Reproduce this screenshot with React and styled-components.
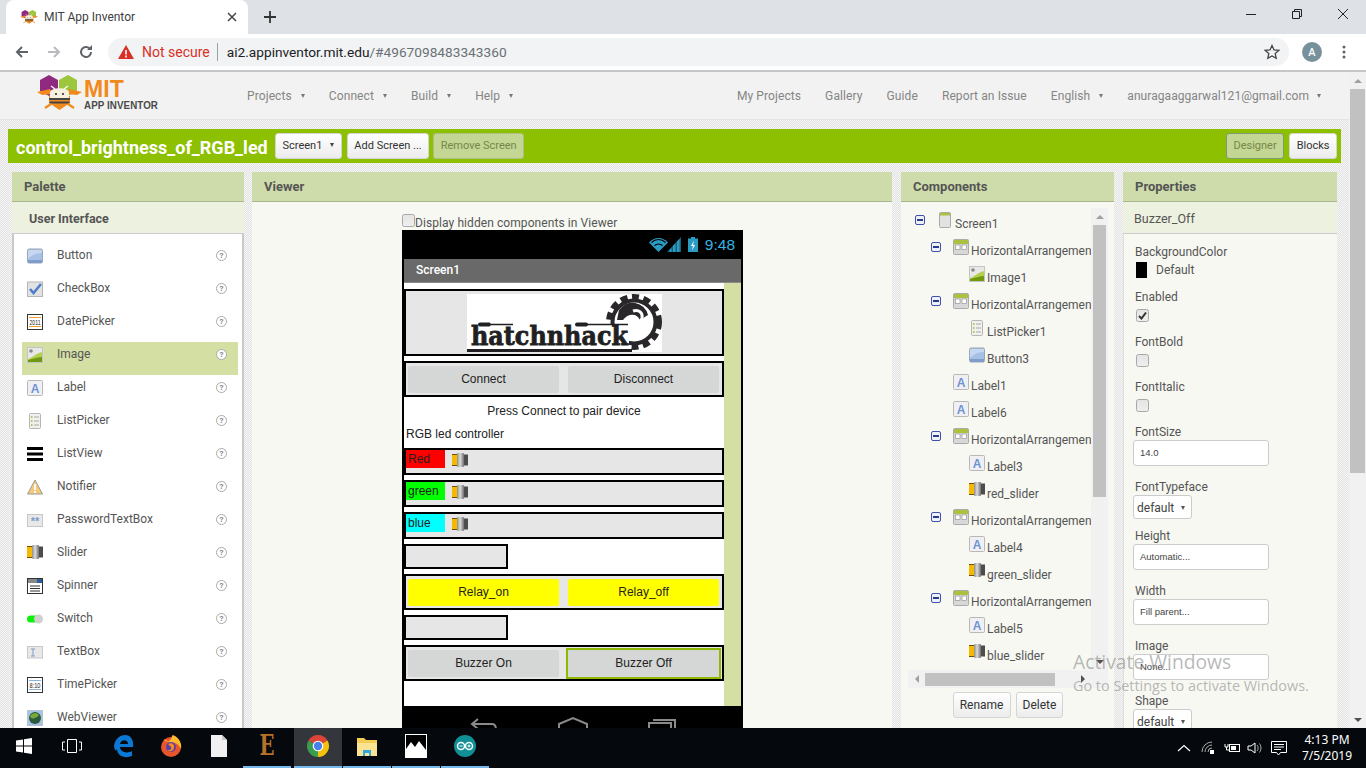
import React from 'react'
import styled, { createGlobalStyle } from 'styled-components'

const GlobalStyle = createGlobalStyle`
  html, body {
    margin: 0;
    padding: 0;
    height: 100%;
    overflow: hidden;
    font-family: Roboto, "Liberation Sans", sans-serif;
  }
  * { box-sizing: border-box; }
  svg { display: block; flex: none; }
`

const Root = styled.div`
  position: relative;
  width: 1366px;
  height: 768px;
  display: flex;
  flex-direction: column;
  overflow: hidden;
  background: #fff;
`

/* browser chrome */
const TabStrip = styled.div`
  height: 34px;
  flex: none;
  display: flex;
  background: #dee1e6;
`
const Tab = styled.div`
  width: 242px;
  margin-left: 6px;
  background: #fff;
  border-radius: 8px 8px 0 0;
  display: flex;
  align-items: center;
  padding: 0 10px 0 14px;
  font-size: 12px;
  color: #3c4043;
`
const TabTitle = styled.span`
  margin-left: 6px;
  flex: 1;
`
const NewTab = styled.div`
  width: 44px;
  display: flex;
  align-items: center;
  justify-content: center;
`
const Caption = styled.div`
  margin-left: auto;
  display: flex;
`
const CaptionButton = styled.div`
  width: 46px;
  display: flex;
  align-items: center;
  justify-content: center;
  padding-bottom: 6px;
`
const UrlBar = styled.div`
  height: 38px;
  flex: none;
  background: #fff;
  border-bottom: 2px solid #c4c6c8;
  display: flex;
  align-items: flex-start;
  padding: 4px 0 0 6px;
`
const NavButton = styled.div`
  width: 32px;
  height: 28px;
  display: flex;
  align-items: center;
  justify-content: center;
`
const Omnibox = styled.div`
  width: 1181px;
  height: 28px;
  margin-left: 6px;
  background: #f1f3f4;
  border-radius: 14px;
  display: flex;
  align-items: center;
  padding: 0 9px 0 10px;
  font-size: 13.7px;
`
const NotSecure = styled.span`
  margin-left: 8px;
  color: #d93025;
  font-size: 14px;
`
const Divider = styled.span`
  width: 1px;
  height: 18px;
  background: #9aa0a6;
  margin: 0 9px 0 7px;
`
const Host = styled.span`
  color: #202124;
`
const Path = styled.span`
  color: #6b7075;
`
const Star = styled.div`
  margin-left: auto;
`
const Avatar = styled.div`
  width: 20px;
  height: 20px;
  margin: 4px 0 0 13px;
  border-radius: 50%;
  background: #78909c;
  color: #fff;
  font-size: 11px;
  font-weight: 500;
  display: flex;
  align-items: center;
  justify-content: center;
`
const Kebab = styled.div`
  margin: 7px 0 0 20px;
`

/* page */
const PageRow = styled.div`
  flex: 1;
  min-height: 0;
  display: flex;
`
const Page = styled.div`
  width: 1349px;
  display: flex;
  flex-direction: column;
  overflow: hidden;
  background-color: #f3f3f3;
  background-image: repeating-conic-gradient(#e2e2e2 0 25%, #f6f6f6 0 50%);
  background-size: 2px 2px;
`
const PageScroll = styled.div`
  width: 17px;
  background: #f1f1f1;
  display: flex;
  flex-direction: column;
  align-items: center;
`
const ScrollArrow = styled.div`
  height: 17px;
  flex: none;
  display: flex;
  align-items: center;
  justify-content: center;
`
const PageThumb = styled.div`
  width: 15px;
  height: 384px;
  background: #c1c1c1;
`
const Spacer = styled.div`
  flex: 1;
`
const Header = styled.div`
  height: 48px;
  flex: none;
  background: #f2f2f2;
  border-bottom: 1px solid #e4e4e4;
  display: flex;
  align-items: center;
  padding: 0 28px 0 36px;
  font-size: 12px;
  letter-spacing: 0.1px;
  color: #858585;
`
const Logo = styled.div`
  width: 211px;
  flex: none;
  padding-bottom: 3px;
`
const Menu = styled.div`
  display: flex;
  gap: 24px;
  margin-left: ${p => (p.$right ? 'auto' : '0')};
  padding-top: ${p => (p.$right ? '0' : '1px')};
`
const MenuItem = styled.span`
  display: flex;
  align-items: center;
  gap: 9px;
  white-space: nowrap;
`
const EmailItem = styled(MenuItem)`
  letter-spacing: 0.06px;
  gap: 8px;
`
const Caret = styled.i`
  width: 0;
  height: 0;
  border-left: 2.5px solid transparent;
  border-right: 2.5px solid transparent;
  border-top: 4px solid ${p => p.$color || '#777'};
`
const ProjectBar = styled.div`
  height: 34px;
  flex: none;
  margin: 9px 8px;
  background: #8cc000;
  display: flex;
  align-items: center;
  padding: 0 4px 0 8px;
`
const ProjectName = styled.div`
  width: 259px;
  padding-top: 2px;
  color: #fff;
  font-size: 18px;
  font-weight: 700;
  white-space: nowrap;
`
const ToolButton = styled.div`
  height: 26px;
  display: flex;
  align-items: center;
  gap: 8px;
  padding: 0 6.5px 2px;
  margin-right: ${p => p.$mr ?? 5}px;
  font-size: 11px;
  border-radius: 3px;
  white-space: nowrap;
  color: ${p => (p.$active ? '#76874a' : '#333')};
  background: ${p => (p.$active ? '#c3d694' : 'linear-gradient(#fff, #ececec)')};
  border: 1px solid ${p => (p.$active ? p.$edge || '#aebf85' : '#d4d4d4')};
`
const ToolSpacer = styled.div`
  margin-left: auto;
`
const Panels = styled.div`
  flex: 1;
  min-height: 0;
  display: flex;
  padding-left: 12px;
`
const Panel = styled.section`
  width: ${p => p.$w}px;
  margin-right: ${p => p.$mr || 0}px;
  flex: none;
  display: flex;
  flex-direction: column;
  overflow: hidden;
  background: #f7f8f2;
`
const PanelHead = styled.div`
  height: 30px;
  flex: none;
  background: #cddcaa;
  border-bottom: 1px solid #aab78e;
  padding: 0 12px;
  line-height: 29px;
  font-size: 13px;
  font-weight: 700;
  color: #555;
`
const SubHead = styled.div`
  height: 32px;
  flex: none;
  background: #edf1e0;
  border-bottom: 1px solid #ccc;
  padding: 0 ${p => (p.$bold ? 17 : 11)}px;
  line-height: 33px;
  font-size: 12.5px;
  font-weight: ${p => (p.$bold ? 700 : 400)};
  color: #555;
`

/* palette */
const PaletteList = styled.div`
  flex: 1;
  background: #fff;
  border-left: 2px solid #c9c9c9;
  border-right: 2px solid #c9c9c9;
  padding: 9px 4px 0 8px;
  overflow: hidden;
`
const PaletteRow = styled.div`
  height: 33px;
  display: flex;
  align-items: flex-start;
  padding: 4px 11px 0 5px;
  font-size: 12px;
  line-height: 16px;
  color: #555;
  background: ${p => (p.$selected ? '#d3dfa3' : 'transparent')};
`
const PaletteIcon = styled.div`
  width: 30px;
  padding-top: 1px;
  flex: none;
`
const PaletteName = styled.span`
  flex: 1;
`
const Help = styled.span`
  width: 11px;
  height: 11px;
  margin-top: 3px;
  border: 1px solid #aaa;
  border-radius: 50%;
  font-size: 8px;
  line-height: 9px;
  font-weight: 700;
  text-align: center;
  color: #888;
  background: #fff;
`

/* viewer */
const ViewerBody = styled.div`
  flex: 1;
  padding: 12px 0 0 150px;
`
const HiddenToggle = styled.div`
  height: 16px;
  display: flex;
  font-size: 12px;
  letter-spacing: 0.08px;
  line-height: 19px;
  color: #555;
`
const Check = styled.span`
  width: 13px;
  height: 13px;
  flex: none;
  border: 1px solid #a8a8a8;
  border-radius: 2.5px;
  background: linear-gradient(#e4e4e4, #efefef);
  display: flex;
  align-items: center;
  justify-content: center;
`
const Phone = styled.div`
  width: 341px;
  background: #000;
  padding: 0 2px;
`
const StatusBar = styled.div`
  height: 29px;
  display: flex;
  align-items: center;
  justify-content: flex-end;
  gap: 7px;
  padding: 0 6px 0 0;
  color: #33b5e5;
  font-family: "Liberation Sans", sans-serif;
  font-size: 15.5px;
`
const TitleBar = styled.div`
  height: 24px;
  background: #696969;
  color: #fff;
  padding-left: 12px;
  font-size: 12px;
  font-weight: 500;
  line-height: 22px;
  box-shadow: inset 0 -1px 0 #8a8a8a;
`
const Screen = styled.div`
  height: 423px;
  display: flex;
  background: #fff;
  font-family: "Liberation Sans", sans-serif;
  font-size: 12px;
  color: #222;
`
const ScreenMain = styled.div`
  width: 320px;
  padding-top: 6px;
`
const ScreenScroll = styled.div`
  width: 17px;
  background: #d3dfa3;
`
const Arrangement = styled.div`
  height: ${p => p.$h}px;
  width: ${p => p.$w || 320}px;
  margin-bottom: ${p => (p.$flush ? 0 : 5)}px;
  border: 2px solid #000;
  background: #e6e6e6;
  display: flex;
  align-items: ${p => p.$align || 'center'};
  justify-content: ${p => p.$justify || 'flex-start'};
  gap: ${p => p.$gap || 0}px;
  padding-left: ${p => p.$pl || 0}px;
`
const LogoSlot = styled.div`
  margin-top: 3px;
`
const AppButton = styled.div`
  width: 151px;
  height: 27px;
  flex: none;
  border-radius: ${p => (p.$selected ? 0 : 2)}px;
  display: flex;
  align-items: center;
  justify-content: center;
  background: ${p => p.$bg || '#d5d7d6'};
  outline: ${p => (p.$selected ? '2px solid #8fb800' : 'none')};
`
const CenterText = styled.div`
  height: 27px;
  line-height: 29px;
  text-align: center;
`
const LeftText = styled.div`
  height: 19px;
  margin-bottom: 5px;
  padding: 1px 2px 0;
  line-height: 18px;
`
const ColorLabel = styled.div`
  width: 39px;
  height: 18px;
  flex: none;
  padding-left: 2px;
  line-height: 19px;
  background: ${p => p.$bg};
`
const SliderWrap = styled.div`
  margin: 3px 0 0 7px;
`
const SoftKeys = styled.div`
  height: 40px;
  display: flex;
  justify-content: center;
  gap: 60px;
  padding-top: 10px;
`

/* components */
const TreeFrame = styled.div`
  margin: 6px 0 0 7px;
  width: 200px;
  display: grid;
  grid-template-columns: 183px 17px;
  grid-template-rows: 462px 18px;
`
const Tree = styled.div`
  overflow: hidden;
  padding-top: 3px;
  font-size: 12px;
  line-height: 16px;
  color: #555;
`
const TreeRow = styled.div`
  height: 27px;
  display: flex;
  align-items: flex-start;
  white-space: nowrap;
  padding-left: ${p => 7 + p.$level * 16}px;
`
const ToggleCell = styled.div`
  width: ${p => (p.$root ? 24 : 22)}px;
  flex: none;
  padding-top: 4px;
`
const Toggle = styled.span`
  width: 10px;
  height: 10px;
  display: flex;
  align-items: center;
  justify-content: center;
  border: 1px solid #3f51a8;
  border-radius: 2px;
  background: #eef0fa;
`
const Minus = styled.i`
  width: 6px;
  height: 1.5px;
  background: #2a3a90;
`
const TreeIcon = styled.div`
  width: ${p => (p.$root ? 14 : 16)}px;
  flex: none;
  padding-top: 1px;
  margin-right: 2px;
`
const TreeLabel = styled.span`
  padding-top: 5px;
`
const VScroll = styled.div`
  background: #f1f1f1;
  display: flex;
  flex-direction: column;
  align-items: center;
`
const VThumb = styled.div`
  width: 13px;
  height: 272px;
  background: #c1c1c1;
`
const HScroll = styled.div`
  background: #f1f1f1;
  display: flex;
  align-items: center;
`
const HThumb = styled.div`
  width: 130px;
  height: 13px;
  background: #c1c1c1;
`
const HArrow = styled.div`
  width: 17px;
  flex: none;
  display: flex;
  align-items: center;
  justify-content: center;
`
const Corner = styled.div`
  background: #f1f1f1;
`
const TreeActions = styled.div`
  display: flex;
  justify-content: center;
  gap: 5px;
  margin: 4px 0 0 1px;
`
const ActionButton = styled.div`
  height: 26px;
  padding: 0 6px;
  display: flex;
  align-items: center;
  font-size: 12px;
  color: #333;
  border: 1px solid #d4d4d4;
  border-radius: 3px;
  background: linear-gradient(#fff, #ececec);
`

/* properties */
const PropList = styled.div`
  flex: 1;
  padding: 10px 0 0 11px;
  font-size: 12px;
  color: #555;
  border-left: 1px solid #ddd;
`
const Prop = styled.div`
  display: flex;
  flex-direction: column;
  align-items: flex-start;
  padding-bottom: ${p => p.$pb}px;
`
const PropName = styled.div`
  height: 16px;
  line-height: 16px;
`
const Swatch = styled.div`
  display: flex;
  align-items: center;
  margin: 2px 0 0 1px;
  height: 16px;
  gap: 9px;
`
const SwatchColor = styled.i`
  width: 11px;
  height: 16px;
  background: #000;
`
const PropCheck = styled(Check)`
  margin: 4px 0 0 1px;
`
const TextInput = styled.div`
  width: 136px;
  height: 26px;
  margin-left: -2px;
  padding-left: 6px;
  border: 1px solid #ccc;
  border-radius: 3px;
  background: #fff;
  font-family: "Liberation Sans", sans-serif;
  font-size: 9.5px;
  line-height: 24px;
  color: #444;
`
const SelectBox = styled.div`
  width: 59px;
  height: 24px;
  margin-left: -2px;
  padding: 2px 0 0 3px;
  border: 1px solid #ccc;
  border-radius: 3px;
  background: #fff;
  font-size: 12px;
  display: flex;
  align-items: center;
  gap: 7px;
  color: #444;
`

/* taskbar */
const Taskbar = styled.div`
  height: 40px;
  flex: none;
  background: #05080c;
  display: flex;
  align-items: stretch;
`
const TaskSlot = styled.div`
  width: 48px;
  margin-left: ${p => p.$ml || 0}px;
  display: flex;
  align-items: center;
  justify-content: center;
  padding-bottom: 2px;
  background: ${p => (p.$active ? '#33363a' : 'transparent')};
  border-bottom: ${p => (p.$open ? '2px solid #76b9ed' : '2px solid transparent')};
`
const Tray = styled.div`
  margin-left: auto;
  display: flex;
  align-items: center;
`
const TrayIcon = styled.div`
  width: ${p => p.$w || 24}px;
  display: flex;
  justify-content: center;
`
const Clock = styled.div`
  width: 74px;
  padding-right: 4px;
  color: #fff;
  font-family: "Noto Sans", sans-serif;
  font-size: 12px;
  line-height: 16px;
  text-align: center;
`
const Activation = styled.div`
  position: absolute;
  left: 1073px;
  top: 650px;
  font-family: "Open Sans", sans-serif;
  font-size: 14.4px;
  line-height: 20px;
  color: rgba(140, 140, 140, 0.62);
  white-space: nowrap;
  pointer-events: none;
`
const ActivationTitle = styled.div`
  font-size: 19.3px;
  line-height: 24px;
  margin-bottom: 2px;
`

/* icons */
const Svg = ({ w = 16, h = 16, vb, children }) => (
  <svg width={w} height={h} viewBox={vb || `0 0 ${w} ${h}`}>{children}</svg>
)

const ButtonIcon = () => (
  <Svg>
    <rect x=".5" y="1" width="15" height="14" rx="1.5" fill="#a6c0e6" stroke="#9aa5b5" />
    <path d="M1 2h14v3C9 5 5 7 1 11z" fill="#c6d8f1" />
    <rect x="1" y="12" width="14" height="3" fill="#7f9ccb" />
  </Svg>
)
const CheckIcon = () => (
  <Svg>
    <rect x=".5" y="1" width="15" height="14.5" fill="#e2e2e2" stroke="#b5b5b5" />
    <path d="M3 8l3.5 4L14 3" fill="none" stroke="#4f7fc8" strokeWidth="2.6" />
  </Svg>
)
const DateIcon = () => (
  <Svg>
    <rect x=".5" y=".5" width="15" height="15" fill="#fff" stroke="#333" />
    <path d="M2 3.500h12M2 12.500h12" stroke="#f0a030" />
    <text x="2.500" y="11" fontFamily="Liberation Sans" fontSize="7.500" fill="#222" textLength="11" lengthAdjust="spacingAndGlyphs">2011</text>
  </Svg>
)
const ImageIcon = () => (
  <Svg>
    <rect x=".5" y=".5" width="15" height="15" fill="#e8e8e8" stroke="#c4c4c4" />
    <circle cx="4" cy="4" r="1.8" fill="#8a8a8a" />
    <path d="M1 12c4-1 7-5 14-7v5c-4 0-8 2-14 5z" fill="#b5d04f" />
    <path d="M1 13c5-1 9-3 14-3v5H1z" fill="#6f9a10" />
  </Svg>
)
const LabelIcon = () => (
  <Svg>
    <rect x=".5" y=".5" width="15" height="15" rx="1" fill="#f0f0f4" stroke="#b8b8b8" />
    <text x="8" y="12.5" textAnchor="middle" fontFamily="Liberation Sans" fontSize="12" fontWeight="700" fill="#6f94d2">A</text>
  </Svg>
)
const ListPickerIcon = () => (
  <Svg>
    <rect x="2.5" y=".5" width="11" height="15" rx="1" fill="#f0f0ec" stroke="#b5b5b5" />
    <path d="M4 4h1.5M4 8h1.5M4 12h1.5" stroke="#9ab82a" strokeWidth="1.6" />
    <path d="M7 4h5M7 8h5M7 12h5" stroke="#aaa" />
  </Svg>
)
const ListViewIcon = () => (
  <Svg>
    <path d="M0 2.500h16M0 8h16M0 13.500h16" stroke="#000" strokeWidth="3" />
  </Svg>
)
const NotifierIcon = () => (
  <Svg>
    <path d="M8 1L15.500 15H.5z" fill="#f5c97a" stroke="#9a9a9a" />
    <path d="M8 5v6M8 12v2" stroke="#fff" strokeWidth="1.8" />
  </Svg>
)
const PasswordIcon = () => (
  <Svg>
    <rect x=".5" y="2.500" width="15" height="12" fill="#e8e8e8" stroke="#c8c8c8" />
    <text x="8" y="13" textAnchor="middle" fontFamily="Liberation Sans" fontSize="11" fontWeight="700" fill="#7f9ccb">**</text>
  </Svg>
)
const SliderIcon = () => (
  <Svg h={14}>
    <defs>
      <linearGradient id="sliderMetal">
        <stop offset="0" stopColor="#8c8c8c" />
        <stop offset=".45" stopColor="#dcdcdc" />
        <stop offset="1" stopColor="#6e6e6e" />
      </linearGradient>
    </defs>
    <rect x="0" y="1.500" width="5" height="11" fill="#f7b900" />
    <path d="M0 1.500h5M0 12.500h5" stroke="#6b5200" />
    <rect x="5" y="0" width="7" height="14" rx="1" fill="url(#sliderMetal)" />
    <rect x="12" y="1.500" width="4" height="11" fill="#4c4c4c" />
  </Svg>
)
const SpinnerIcon = () => (
  <Svg>
    <rect x=".5" y=".5" width="15" height="15" fill="#fff" stroke="#333" />
    <rect x="1" y="1" width="14" height="4" fill="#888" />
    <rect x="10" y="1" width="5" height="4" fill="#2d5d9f" />
    <path d="M3 8h10M3 10.500h10M3 13h10" stroke="#333" />
  </Svg>
)
const SwitchIcon = () => (
  <Svg>
    <rect x="0" y="4.500" width="12" height="7" rx="3.500" fill="#0cf00c" />
    <circle cx="11.500" cy="8" r="4.500" fill="#d0d0d0" />
  </Svg>
)
const TextBoxIcon = () => (
  <Svg>
    <rect x=".5" y="2.500" width="15" height="11.500" fill="#e8e8e8" stroke="#c8c8c8" />
    <path d="M4 5h4M4 12h4M6 5v7" stroke="#7f9ccb" fill="none" />
  </Svg>
)
const TimeIcon = () => (
  <Svg>
    <rect x=".5" y=".5" width="15" height="15" fill="#fff" stroke="#333" />
    <path d="M2 3.500h12M2 12.500h12" stroke="#8ab4e0" />
    <text x="2.500" y="11" fontFamily="Liberation Sans" fontSize="7.500" fill="#222" textLength="11" lengthAdjust="spacingAndGlyphs">8:10</text>
  </Svg>
)
const WebIcon = () => (
  <Svg>
    <rect x=".5" y=".5" width="15" height="15" fill="#a8c4e4" stroke="#b5c2d2" />
    <circle cx="8" cy="8" r="6" fill="#2c5a3c" />
    <path d="M3 6c2-3 6-4 8-2 2 2-1 3-3 4S4 9 3 6z" fill="#7aa83a" />
  </Svg>
)
const ScreenIcon = () => (
  <Svg w={12}>
    <rect x=".5" y=".5" width="11" height="15" rx="1" fill="#e2e2e2" stroke="#aaa" />
    <rect x="1" y="1" width="10" height="2.500" fill="#a9c240" />
  </Svg>
)
const ArrangementIcon = () => (
  <Svg>
    <rect x=".5" y=".5" width="15" height="15" rx="1" fill="#d8d8d8" stroke="#aaa" />
    <rect x="1" y="1" width="14" height="4" fill="#a9c240" />
    <rect x="2.500" y="6" width="4.500" height="4.500" fill="#fff" stroke="#888" strokeWidth=".6" />
    <rect x="9" y="6" width="4.500" height="4.500" fill="#fff" stroke="#888" strokeWidth=".6" />
  </Svg>
)

const Bee = () => (
  <g>
    <path d="M1 18l13-3 2 5-10 1zM46 18l-13-3-2 5 10 1z" fill="#f08a1d" />
    <path d="M13 22h21v7l-10.500 7L13 29z" fill="#f08a1d" />
    <path d="M14 18c2-5 17-5 19 0v6H14z" fill="#f7f0dc" />
    <path d="M13 25h21M13.500 28.500h20" stroke="#444" strokeWidth="1.800" />
    <path d="M9 34l6-4M38 34l-6-4" stroke="#f08a1d" strokeWidth="2.200" />
    <circle cx="20" cy="20" r="1.100" fill="#333" />
    <circle cx="27" cy="20" r="1.100" fill="#333" />
    <path d="M19 15l-4-3M28 15l4-3" stroke="#fff" strokeWidth="1.300" />
  </g>
)
const Hexes = () => (
  <g>
    <path d="M13 1l9 5v11l-9 5-9-5V6z" fill="#8f2a80" />
    <path d="M32 1l9 5v11l-9 5-9-5V6z" fill="#9cc63c" />
  </g>
)
const AppLogo = () => (
  <Svg w={126} h={40}>
    <Hexes />
    <Bee />
    <text x="48" y="23" fontFamily="Liberation Sans" fontSize="23" fontWeight="700" fill="#f08a1d">MIT</text>
    <text x="48" y="34.500" fontFamily="Liberation Sans" fontSize="11.500" fontWeight="700" fill="#4a4a4a" textLength="74" lengthAdjust="spacingAndGlyphs">APP INVENTOR</text>
  </Svg>
)
const Favicon = () => (
  <Svg w={18} h={16} vb="0 0 46 38">
    <Hexes />
    <Bee />
  </Svg>
)

const HackLogo = () => (
  <Svg w={195} h={58}>
    <rect width="195" height="58" fill="#fff" />
    <circle cx="167" cy="28" r="25" fill="none" stroke="#2a272b" strokeWidth="6" strokeDasharray="7 4.500" />
    <circle cx="167" cy="28" r="21.500" fill="none" stroke="#2a272b" strokeWidth="4" />
    <path d="M152 16a16 16 0 0 1 29 5l-8 5c-3-7-12-7-17 0h-6z" fill="#2a272b" />
    <path d="M166 17c6-2 10 2 9 7-1 4-6 6-7 13" fill="none" stroke="#fff" strokeWidth="3" />
    <rect x="138" y="31" width="24" height="24" fill="#fff" />
    <text x="4" y="51" fontFamily="DejaVu Serif" fontSize="26" fontWeight="700" fill="#221f23" stroke="#221f23" strokeWidth=".8" textLength="157" lengthAdjust="spacingAndGlyphs">hatchnhack</text>
    <path d="M24 30.500h22M119 30.500h42" stroke="#221f23" strokeWidth="1.500" />
    <rect x="11" y="28.500" width="13" height="4" rx="2" fill="#221f23" />
    <rect x="108" y="28.500" width="13" height="4" rx="2" fill="#221f23" />
    <rect x="0" y="55" width="165" height="3" fill="#221f23" />
  </Svg>
)

const WinGlyph = ({ children, w = 16, h = 16 }) => <Svg w={w} h={h}>{children}</Svg>

const paletteItems = [
  ['Button', ButtonIcon],
  ['CheckBox', CheckIcon],
  ['DatePicker', DateIcon],
  ['Image', ImageIcon],
  ['Label', LabelIcon],
  ['ListPicker', ListPickerIcon],
  ['ListView', ListViewIcon],
  ['Notifier', NotifierIcon],
  ['PasswordTextBox', PasswordIcon],
  ['Slider', SliderIcon],
  ['Spinner', SpinnerIcon],
  ['Switch', SwitchIcon],
  ['TextBox', TextBoxIcon],
  ['TimePicker', TimeIcon],
  ['WebViewer', WebIcon],
]

const treeItems = [
  ['Screen1', 0, ScreenIcon, true],
  ['HorizontalArrangement1', 1, ArrangementIcon, true],
  ['Image1', 2, ImageIcon],
  ['HorizontalArrangement2', 1, ArrangementIcon, true],
  ['ListPicker1', 2, ListPickerIcon],
  ['Button3', 2, ButtonIcon],
  ['Label1', 1, LabelIcon],
  ['Label6', 1, LabelIcon],
  ['HorizontalArrangement3', 1, ArrangementIcon, true],
  ['Label3', 2, LabelIcon],
  ['red_slider', 2, SliderIcon],
  ['HorizontalArrangement4', 1, ArrangementIcon, true],
  ['Label4', 2, LabelIcon],
  ['green_slider', 2, SliderIcon],
  ['HorizontalArrangement5', 1, ArrangementIcon, true],
  ['Label5', 2, LabelIcon],
  ['blue_slider', 2, SliderIcon],
]

const Tri = ({ dir, color = '#505050' }) => {
  const d = {
    up: 'M1 7l4-4 4 4z',
    down: 'M1 3l4 4 4-4z',
    left: 'M7 1L3 5l4 4z',
    right: 'M3 1l4 4-4 4z',
  }
  return <Svg w={10} h={10}><path d={d[dir]} fill={color} /></Svg>
}

const sliders = [
  ['Red', '#ff0000'],
  ['green', '#00ff00'],
  ['blue', '#00ffff'],
]

function Palette() {
  return (
    <Panel $w={232} $mr={8}>
      <PanelHead>Palette</PanelHead>
      <SubHead $bold>User Interface</SubHead>
      <PaletteList>
        {paletteItems.map(([name, Icon]) => (
          <PaletteRow key={name} $selected={name === 'Image'}>
            <PaletteIcon><Icon /></PaletteIcon>
            <PaletteName>{name}</PaletteName>
            <Help>?</Help>
          </PaletteRow>
        ))}
      </PaletteList>
    </Panel>
  )
}

function Viewer() {
  return (
    <Panel $w={640} $mr={9}>
      <PanelHead>Viewer</PanelHead>
      <ViewerBody>
        <HiddenToggle><Check />Display hidden components in Viewer</HiddenToggle>
        <Phone>
          <StatusBar>
            <Svg w={32} h={15}>
              <path d="M9.500 15L0 5.500C5 -.5 14 -.5 19 5.500z" fill="#2a9cc4" />
              <path d="M2.500 5.500C6.500 1.500 12.500 1.500 16.500 5.500M5.500 8.500C7.800 6.500 11.200 6.500 13.500 8.500" fill="none" stroke="#000" strokeWidth="1.200" />
              <path d="M18 15L32 0v15z" fill="#17607c" />
              <path d="M28 4.500V15h2.500V2zM24 9v6h2.500V6.300zM20.500 13v2h2v-4z" fill="#2a9cc4" />
            </Svg>
            <Svg w={10} h={15}>
              <rect x="0" y="1.500" width="10" height="13.500" fill="#2a9cc4" />
              <rect x="3" y="0" width="4" height="2" fill="#2a9cc4" />
              <path d="M6 3.500L3 9h2l-1 4.500L7 8H5z" fill="#fff" />
            </Svg>
            <span>9:48</span>
          </StatusBar>
          <TitleBar>Screen1</TitleBar>
          <Screen>
            <ScreenMain>
              <Arrangement $h={67} $justify="center" $align="flex-start">
                <LogoSlot><HackLogo /></LogoSlot>
              </Arrangement>
              <Arrangement $h={36} $pl={2} $gap={9} $flush>
                <AppButton>Connect</AppButton>
                <AppButton>Disconnect</AppButton>
              </Arrangement>
              <CenterText>Press Connect to pair device</CenterText>
              <LeftText>RGB led controller</LeftText>
              {sliders.map(([name, color]) => (
                <Arrangement key={name} $h={27} $align="flex-start">
                  <ColorLabel $bg={color}>{name}</ColorLabel>
                  <SliderWrap><SliderIcon /></SliderWrap>
                </Arrangement>
              ))}
              <Arrangement $h={25} $w={104} />
              <Arrangement $h={36} $pl={2} $gap={9}>
                <AppButton $bg="#ffff00">Relay_on</AppButton>
                <AppButton $bg="#ffff00">Relay_off</AppButton>
              </Arrangement>
              <Arrangement $h={25} $w={104} />
              <Arrangement $h={36} $pl={2} $gap={9}>
                <AppButton>Buzzer On</AppButton>
                <AppButton $selected>Buzzer Off</AppButton>
              </Arrangement>
            </ScreenMain>
            <ScreenScroll />
          </Screen>
          <SoftKeys>
            <Svg w={28} h={20}>
              <path d="M8 3L2 8l6 5M2 8h20c3 0 4 2 4 6" fill="none" stroke="#8a8a8a" strokeWidth="2" />
            </Svg>
            <Svg w={30} h={20}>
              <path d="M1 20V8L15 2l14 6v12" fill="none" stroke="#8a8a8a" strokeWidth="2" />
            </Svg>
            <Svg w={28} h={20}>
              <path d="M1 20V7h22v13M5 4h22v14" fill="none" stroke="#8a8a8a" strokeWidth="2" />
            </Svg>
          </SoftKeys>
        </Phone>
      </ViewerBody>
    </Panel>
  )
}

function Components() {
  return (
    <Panel $w={213} $mr={9}>
      <PanelHead>Components</PanelHead>
      <TreeFrame>
        <Tree>
          {treeItems.map(([name, level, Icon, open]) => (
            <TreeRow key={name} $level={level}>
              <ToggleCell $root={level === 0}>{open && <Toggle><Minus /></Toggle>}</ToggleCell>
              <TreeIcon $root={level === 0}><Icon /></TreeIcon>
              <TreeLabel>{name}</TreeLabel>
            </TreeRow>
          ))}
        </Tree>
        <VScroll>
          <ScrollArrow><Tri dir="up" color="#a0a0a0" /></ScrollArrow>
          <VThumb />
          <Spacer />
          <ScrollArrow><Tri dir="down" /></ScrollArrow>
        </VScroll>
        <HScroll>
          <HArrow><Tri dir="left" color="#a0a0a0" /></HArrow>
          <HThumb />
          <Spacer />
          <HArrow><Tri dir="right" /></HArrow>
        </HScroll>
        <Corner />
      </TreeFrame>
      <TreeActions>
        <ActionButton>Rename</ActionButton>
        <ActionButton>Delete</ActionButton>
      </TreeActions>
    </Panel>
  )
}

const Tick = () => (
  <Svg w={9} h={9}>
    <path d="M1 5l2.500 2.500L8 1.500" fill="none" stroke="#333" strokeWidth="2" />
  </Svg>
)

function Properties() {
  return (
    <Panel $w={214}>
      <PanelHead>Properties</PanelHead>
      <SubHead>Buzzer_Off</SubHead>
      <PropList>
        <Prop $pb={11}>
          <PropName>BackgroundColor</PropName>
          <Swatch><SwatchColor />Default</Swatch>
        </Prop>
        <Prop $pb={12}>
          <PropName>Enabled</PropName>
          <PropCheck><Tick /></PropCheck>
        </Prop>
        <Prop $pb={12}>
          <PropName>FontBold</PropName>
          <PropCheck />
        </Prop>
        <Prop $pb={12}>
          <PropName>FontItalic</PropName>
          <PropCheck />
        </Prop>
        <Prop $pb={13}>
          <PropName>FontSize</PropName>
          <TextInput>14.0</TextInput>
        </Prop>
        <Prop $pb={9}>
          <PropName>FontTypeface</PropName>
          <SelectBox>default<Caret $color="#555" /></SelectBox>
        </Prop>
        <Prop $pb={13}>
          <PropName>Height</PropName>
          <TextInput>Automatic...</TextInput>
        </Prop>
        <Prop $pb={13}>
          <PropName>Width</PropName>
          <TextInput>Fill parent...</TextInput>
        </Prop>
        <Prop $pb={13}>
          <PropName>Image</PropName>
          <TextInput>None...</TextInput>
        </Prop>
        <Prop $pb={9}>
          <PropName>Shape</PropName>
          <SelectBox>default<Caret $color="#555" /></SelectBox>
        </Prop>
      </PropList>
    </Panel>
  )
}

function BrowserChrome() {
  return (
    <>
      <TabStrip>
        <Tab>
          <Favicon />
          <TabTitle>MIT App Inventor</TabTitle>
          <Svg w={12} h={12}>
            <path d="M2 2l8 8M10 2l-8 8" stroke="#444" strokeWidth="1.500" />
          </Svg>
        </Tab>
        <NewTab>
          <Svg w={12} h={12}><path d="M6 0v12M0 6h12" stroke="#333" strokeWidth="1.800" /></Svg>
        </NewTab>
        <Caption>
          <CaptionButton>
            <Svg w={10} h={10}><path d="M0 5.500h10" stroke="#222" /></Svg>
          </CaptionButton>
          <CaptionButton>
            <Svg w={10} h={10}>
              <path d="M.5 2.500h7v7h-7zM2.500 2.500v-2h7v7h-2" fill="none" stroke="#222" />
            </Svg>
          </CaptionButton>
          <CaptionButton>
            <Svg w={10} h={10}><path d="M0 0l10 10M10 0L0 10" stroke="#222" /></Svg>
          </CaptionButton>
        </Caption>
      </TabStrip>
      <UrlBar>
        <NavButton>
          <Svg><path d="M14 8H3M8 3L3 8l5 5" fill="none" stroke="#5f6368" strokeWidth="2" /></Svg>
        </NavButton>
        <NavButton>
          <Svg><path d="M2 8h11M8 3l5 5-5 5" fill="none" stroke="#b8babd" strokeWidth="2" /></Svg>
        </NavButton>
        <NavButton>
          <Svg>
            <path d="M13 8a5 5 0 1 1-1.500-3.600" fill="none" stroke="#5f6368" strokeWidth="2" />
            <path d="M14 1v5H9z" fill="#5f6368" />
          </Svg>
        </NavButton>
        <Omnibox>
          <Svg><path d="M8 1l8 14H0z" fill="#d93025" /><path d="M8 6v4.500M8 11.500v2" stroke="#fff" strokeWidth="1.600" /></Svg>
          <NotSecure>Not secure</NotSecure>
          <Divider />
          <Host>ai2.appinventor.mit.edu</Host>
          <Path>/#4967098483343360</Path>
          <Star>
            <Svg><path d="M8 1.500l2 4.400 4.800.5-3.600 3.200 1 4.700L8 11.900l-4.200 2.400 1-4.700L1.200 6.400 6 5.900z" fill="none" stroke="#444" strokeWidth="1.300" /></Svg>
          </Star>
        </Omnibox>
        <Avatar>A</Avatar>
        <Kebab>
          <Svg w={4} h={14}>
            <circle cx="2" cy="2" r="1.500" fill="#5f6368" />
            <circle cx="2" cy="7" r="1.500" fill="#5f6368" />
            <circle cx="2" cy="12" r="1.500" fill="#5f6368" />
          </Svg>
        </Kebab>
      </UrlBar>
    </>
  )
}

function AppHeader() {
  return (
    <Header>
      <Logo><AppLogo /></Logo>
      <Menu>
        <MenuItem>Projects<Caret /></MenuItem>
        <MenuItem>Connect<Caret /></MenuItem>
        <MenuItem>Build<Caret /></MenuItem>
        <MenuItem>Help<Caret /></MenuItem>
      </Menu>
      <Menu $right>
        <MenuItem>My Projects</MenuItem>
        <MenuItem>Gallery</MenuItem>
        <MenuItem>Guide</MenuItem>
        <MenuItem>Report an Issue</MenuItem>
        <MenuItem>English<Caret /></MenuItem>
        <EmailItem>anuragaaggarwal121@gmail.com<Caret /></EmailItem>
      </Menu>
    </Header>
  )
}

function WindowsTaskbar() {
  return (
    <Taskbar>
      <TaskSlot>
        <WinGlyph>
          <path d="M0 2.500l7-1v6H0zM8 1.300L16 0v7.500H8zM0 8.500h7v6l-7-1zM8 8.500h8V16l-8-1.300z" fill="#fff" />
        </WinGlyph>
      </TaskSlot>
      <TaskSlot>
        <WinGlyph w={20}>
          <path d="M5.500 1.500h9v13h-9zM3 4H.5v8H3M17 4h2.500v8H17" fill="none" stroke="#fff" />
        </WinGlyph>
      </TaskSlot>
      <TaskSlot $ml={3}>
        <WinGlyph w={22} h={24}>
          <path d="M2 12C3 4 9 1 13 1c5 0 9 4 8 12H8c0 5 7 7 12 4v5c-7 3-15 0-15-7-1 2-2 3-3-3zm6-2h8c0-5-7-5-8 0z" fill="#0b78d4" />
        </WinGlyph>
      </TaskSlot>
      <TaskSlot>
        <WinGlyph w={22} h={24}>
          <circle cx="11" cy="13" r="10" fill="#e8542b" />
          <path d="M4 5c1 3 3 3 5 2 4-3 2-5 4-6 7 3 9 9 8 14-2-4-5-7-10-6z" fill="#fdb92e" />
          <circle cx="11" cy="13" r="5" fill="#5a3fa8" />
          <path d="M8 10c3-2 7 0 6 4s-5 4-7 2c3 1 5-1 4-3z" fill="#f58a1f" />
        </WinGlyph>
      </TaskSlot>
      <TaskSlot>
        <WinGlyph w={16} h={22}>
          <path d="M0 0h11l5 5v17H0z" fill="#f1f1f1" />
          <path d="M11 0v5h5z" fill="#c8c8c8" />
        </WinGlyph>
      </TaskSlot>
      <TaskSlot $open>
        <WinGlyph w={16} h={24}>
          <text x="8" y="21" textAnchor="middle" fontFamily="DejaVu Serif" fontSize="27" fontWeight="700" fill="#b5732a" textLength="15" lengthAdjust="spacingAndGlyphs">E</text>
        </WinGlyph>
      </TaskSlot>
      <TaskSlot $ml={3} $active $open>
        <WinGlyph w={24} h={24}>
          <path d="M2.470 6.500A11 11 0 0 1 21.530 6.500L12 12z" fill="#db4437" />
          <path d="M21.530 6.500A11 11 0 0 1 12 23L12 12z" fill="#f4c20d" />
          <path d="M12 23A11 11 0 0 1 2.470 6.500L12 12z" fill="#3a9c4e" />
          <circle cx="12" cy="12" r="5.300" fill="#fff" />
          <circle cx="12" cy="12" r="4.200" fill="#4a80ea" />
        </WinGlyph>
      </TaskSlot>
      <TaskSlot $ml={1} $open>
        <WinGlyph w={22} h={24}>
          <path d="M1 4h7l2 2h11v16H1z" fill="#f5cd55" />
          <path d="M1 9h20v13H1z" fill="#fbe391" />
          <path d="M7 22v-6h8v6h-2v-3H9v3z" fill="#2ea8e0" />
        </WinGlyph>
      </TaskSlot>
      <TaskSlot $ml={1} $open>
        <WinGlyph w={22} h={24}>
          <rect x=".5" y=".5" width="21" height="23" fill="#000" stroke="#fff" />
          <path d="M1 23V15l5-7 4 5 4-6 7 9v7z" fill="#fff" />
        </WinGlyph>
      </TaskSlot>
      <TaskSlot $ml={1} $open>
        <WinGlyph w={22} h={24}>
          <circle cx="11" cy="12" r="11" fill="#0f8f96" />
          <circle cx="7" cy="12" r="3.500" fill="none" stroke="#fff" strokeWidth="1.500" />
          <circle cx="15" cy="12" r="3.500" fill="none" stroke="#fff" strokeWidth="1.500" />
          <path d="M5.500 12h3M13.500 12h3M15 10.500v3" stroke="#fff" />
        </WinGlyph>
      </TaskSlot>
      <Tray>
        <TrayIcon>
          <Svg w={14} h={8}><path d="M1 7l6-5.500L13 7" fill="none" stroke="#fff" strokeWidth="1.200" /></Svg>
        </TrayIcon>
        <TrayIcon>
          <Svg w={14} h={14}>
            <path d="M1 11a10 10 0 0 1 10-10M4 11a7 7 0 0 1 7-7M7 11a4 4 0 0 1 4-4" fill="none" stroke="#aaa" />
            <rect x="9" y="9" width="4" height="4" fill="#fff" />
          </Svg>
        </TrayIcon>
        <TrayIcon>
          <Svg w={16} h={12}>
            <path d="M1 2v3h3V2M2.500 5v3h3" fill="none" stroke="#fff" />
            <rect x="5.500" y="2.500" width="10" height="7" fill="none" stroke="#fff" />
            <rect x="7" y="4" width="5" height="4" fill="#fff" />
          </Svg>
        </TrayIcon>
        <TrayIcon $w={22}>
          <Svg w={16} h={14}>
            <path d="M1 5h3l4-3v10L4 9H1z" fill="none" stroke="#fff" />
            <path d="M10 4c1.500 2 1.500 4 0 6M12.500 2.500c2 3 2 6 0 9" fill="none" stroke="#aaa" />
          </Svg>
        </TrayIcon>
        <TrayIcon $w={26}>
          <Svg w={16} h={16}>
            <path d="M.5 1.500h15v11h-6l-2 2.500-2-2.500h-5z" fill="none" stroke="#fff" />
            <path d="M3 4.500h10M3 7h10M3 9.500h7" stroke="#fff" />
          </Svg>
        </TrayIcon>
        <Clock>4:13 PM<br />7/5/2019</Clock>
      </Tray>
    </Taskbar>
  )
}

export default function App() {
  return (
    <Root>
      <GlobalStyle />
      <BrowserChrome />
      <PageRow>
        <Page>
          <AppHeader />
          <ProjectBar>
            <ProjectName>control_brightness_of_RGB_led</ProjectName>
            <ToolButton>Screen1<Caret $color="#444" /></ToolButton>
            <ToolButton $mr={4}>Add Screen ...</ToolButton>
            <ToolButton $active>Remove Screen</ToolButton>
            <ToolSpacer />
            <ToolButton $active $edge="#7d9b6e">Designer</ToolButton>
            <ToolButton $mr={0}>Blocks</ToolButton>
          </ProjectBar>
          <Panels>
            <Palette />
            <Viewer />
            <Components />
            <Properties />
          </Panels>
        </Page>
        <PageScroll>
          <ScrollArrow><Tri dir="up" color="#a0a0a0" /></ScrollArrow>
          <PageThumb />
          <Spacer />
          <ScrollArrow><Tri dir="down" /></ScrollArrow>
        </PageScroll>
      </PageRow>
      <WindowsTaskbar />
      <Activation>
        <ActivationTitle>Activate Windows</ActivationTitle>
        Go to Settings to activate Windows.
      </Activation>
    </Root>
  )
}
